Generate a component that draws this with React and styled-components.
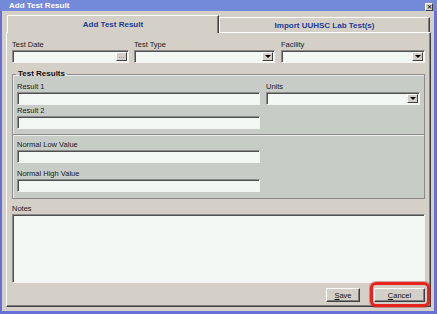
import styled, { createGlobalStyle } from "styled-components";

//  //  //  GLOBAL   //  //  //

const GlobalStyle = createGlobalStyle`
	* { box-sizing: border-box; }
	html, body { margin: 0; padding: 0; background: #ffffff; }
	body { font-family: "Liberation Sans", Arial, sans-serif; }
`;

//  //  //  WINDOW   //  //  //

const Window = styled.div`
	width: 437px;
	height: 314px;
	display: flex;
	flex-direction: column;
	overflow: hidden;
`;

const TitleBar = styled.div`
	height: 11px;
	flex: none;
	display: flex;
	align-items: center;
	justify-content: space-between;
	padding: 0 4px 0 9px;
	background: #7389d9;
	color: #ffffff;
	font-size: 8px;
	font-weight: 700;
	line-height: 11px;
`;

const CloseBox = styled.div`
	width: 8px;
	height: 8px;
	margin-top: 3px;
	display: flex;
	align-items: center;
	justify-content: center;
	background: #d4d0c8;
	border: 1px solid;
	border-color: #ffffff #404040 #404040 #ffffff;
	color: #202020;
	font-size: 6px;
	line-height: 6px;
`;

const Frame = styled.div`
	flex: 1;
	display: flex;
	flex-direction: column;
	padding: 4px 3px 4px 4px;
	background: #d4d0c8;
	border-style: solid;
	border-color: #6870d8;
	border-width: 0 3px 3px 2px;
`;

//  //  //  TABS   //  //  //

const TabStrip = styled.div`
	height: 17px;
	flex: none;
	display: flex;
	align-items: flex-start;
	padding-left: 1px;
`;

const Tab = styled.div`
	position: relative;
	z-index: 1;
	width: ${(p) => (p.$active ? "212px" : "211px")};
	height: ${(p) => (p.$active ? "18px" : "15px")};
	margin-top: ${(p) => (p.$active ? "0" : "2px")};
	display: flex;
	align-items: center;
	justify-content: center;
	background: #d4d0c8;
	border-style: solid;
	border-color: #ffffff #404040 #d4d0c8 #ffffff;
	border-width: 1px 1px 0 1px;
	box-shadow: inset -1px 0 0 #808080;
	color: #1b3a96;
	font-size: 8px;
	font-weight: 700;
`;

const TabPanel = styled.div`
	flex: 1;
	display: flex;
	flex-direction: column;
	padding: 7px 5px 2px 5px;
	border: 1px solid;
	border-color: #ffffff #404040 #404040 #ffffff;
	box-shadow: inset -1px -1px 0 #808080;
`;

//  //  //  FORM PARTS   //  //  //

const Row = styled.div`
	display: grid;
	grid-template-columns: ${(p) => p.$cols};
	column-gap: ${(p) => p.$gap || "6px"};
	margin-top: ${(p) => p.$top || "0"};
`;

const Field = styled.div`
	display: flex;
	flex-direction: column;
	margin-top: ${(p) => p.$top || "0"};
`;

const Label = styled.div`
	height: 9px;
	margin-bottom: 1px;
	color: #1a1a1a;
	font-size: 7.5px;
	line-height: 9px;
	white-space: nowrap;
`;

const TextBox = styled.div`
	height: ${(p) => p.$h || "13px"};
	margin-top: ${(p) => p.$gap || "0"};
	display: flex;
	justify-content: flex-end;
	align-items: stretch;
	padding: 1px;
	background: #f4f8f4;
	border: 1px solid;
	border-color: #8a8a8a #f4f4f4 #f4f4f4 #8a8a8a;
	box-shadow: inset 1px 1px 0 #505050;
`;

const SideButton = styled.div`
	width: 11px;
	display: flex;
	align-items: center;
	justify-content: center;
	background: #d4d0c8;
	border: 1px solid;
	border-color: #ffffff #404040 #404040 #ffffff;
	color: #202020;
	font-size: 6px;
	line-height: 6px;
`;

const Arrow = styled.div`
	width: 0;
	height: 0;
	border-left: 3px solid transparent;
	border-right: 3px solid transparent;
	border-top: 3px solid #000000;
`;

const Group = styled.fieldset`
	margin: 6px 0 0 0;
	padding: 3px 4px 6px 4px;
	min-width: 0;
	background: #c8ccc6;
	border: 1px solid #8a8a8a;
	box-shadow: inset 1px 1px 0 #ececec;
`;

const Legend = styled.legend`
	padding: 0 2px;
	margin-left: -1px;
	color: #101010;
	font-size: 8px;
	font-weight: 700;
	line-height: 10px;
`;

const Divider = styled.div`
	height: 2px;
	margin: 5px -4px 4px -4px;
	border-top: 1px solid #8a8a8a;
	border-bottom: 1px solid #eeeeee;
`;

const ButtonRow = styled.div`
	margin-top: 5px;
	display: flex;
	justify-content: flex-end;
	gap: 14px;
`;

const Button = styled.div`
	position: relative;
	width: ${(p) => p.$w};
	height: 14px;
	display: flex;
	align-items: center;
	justify-content: center;
	background: #d4d0c8;
	border: 1px solid;
	border-color: #ffffff #404040 #404040 #ffffff;
	box-shadow: inset -1px -1px 0 #808080;
	color: #101010;
	font-size: 7.5px;

	u { text-decoration-thickness: 1px; }
`;

const Highlight = styled.div`
	position: absolute;
	top: -7px;
	bottom: -6px;
	left: -5px;
	right: -6px;
	border: 3px solid #e8231f;
	border-radius: 6px;
	box-shadow: 0 0 0 1px rgba(150, 20, 20, 0.35);
	pointer-events: none;
`;

//  //  //  APP   //  //  //

export default function App() {
	return (
		<>
			<GlobalStyle />
			<Window>
				<TitleBar>
					<span>Add Test Result</span>
					<CloseBox>✕</CloseBox>
				</TitleBar>
				<Frame>
					<TabStrip>
						<Tab $active>Add Test Result</Tab>
						<Tab>Import UUHSC Lab Test(s)</Tab>
					</TabStrip>
					<TabPanel>
						<Row $cols="117px 142px 1fr" $gap="5px">
							<Field>
								<Label>Test Date</Label>
								<TextBox>
									<SideButton>···</SideButton>
								</TextBox>
							</Field>
							<Field style={{ marginRight: "1px" }}>
								<Label>Test Type</Label>
								<TextBox>
									<SideButton><Arrow /></SideButton>
								</TextBox>
							</Field>
							<Field>
								<Label>Facility</Label>
								<TextBox>
									<SideButton><Arrow /></SideButton>
								</TextBox>
							</Field>
						</Row>

						<Group>
							<Legend>Test Results</Legend>
							<Row $cols="243px 1fr">
								<div>
									<Field>
										<Label>Result 1</Label>
										<TextBox />
									</Field>
									<Field $top="1px">
										<Label>Result 2</Label>
										<TextBox />
									</Field>
								</div>
								<Field>
									<Label>Units</Label>
									<TextBox>
										<SideButton><Arrow /></SideButton>
									</TextBox>
								</Field>
							</Row>
							<Divider />
							<Row $cols="243px 1fr">
								<div>
									<Field>
										<Label>Normal Low Value</Label>
										<TextBox />
									</Field>
									<Field $top="6px">
										<Label>Normal High Value</Label>
										<TextBox />
									</Field>
								</div>
							</Row>
						</Group>

						<Field $top="5px">
							<Label>Notes</Label>
							<TextBox $h="69px" />
						</Field>

						<ButtonRow>
							<Button $w="34px"><span><u>S</u>ave</span></Button>
							<Button $w="51px">
								<span><u>C</u>ancel</span>
								<Highlight />
							</Button>
						</ButtonRow>
					</TabPanel>
				</Frame>
			</Window>
		</>
	);
}
